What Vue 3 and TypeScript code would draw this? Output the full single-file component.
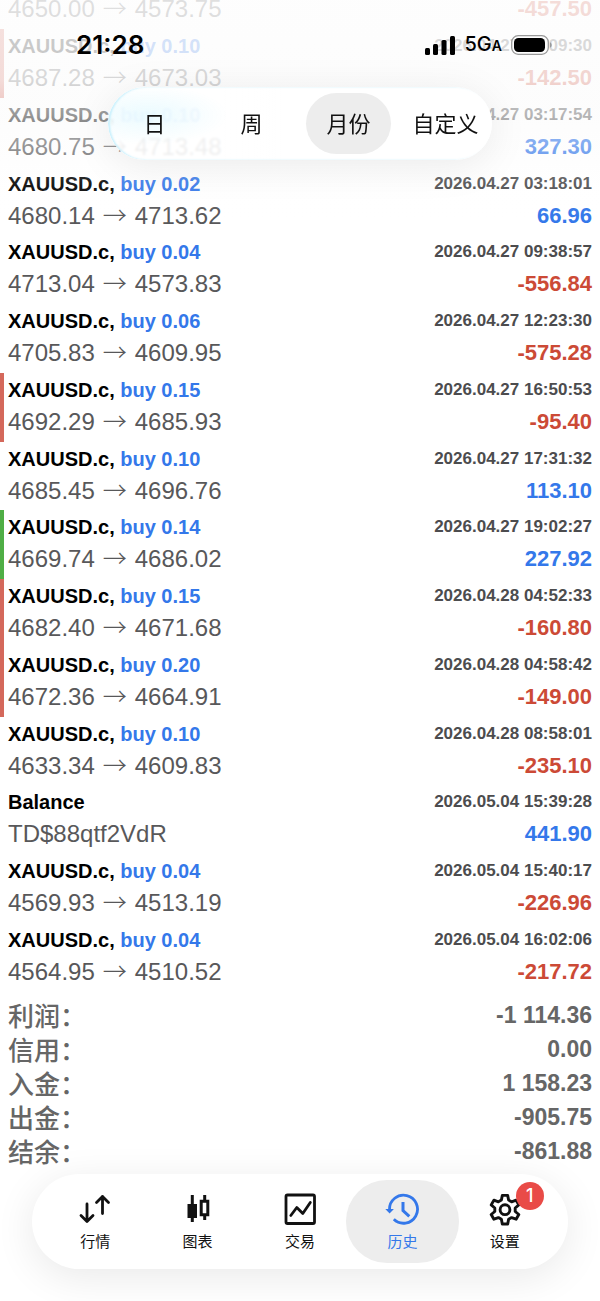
<script setup lang="ts">
import { ref } from 'vue'

interface Deal {
  title: string
  action?: string
  open: string
  close?: string
  time: string
  profit: string
  mark?: 'sl' | 'tp'
}

const symbol = 'XAUUSD.c,'

const deals: Deal[] = [
  { title: symbol, action: 'buy 0.10', open: '4650.00', close: '4573.75', time: '2026.04.24 15:02:11', profit: '-457.50' },
  { title: symbol, action: 'buy 0.10', open: '4687.28', close: '4673.03', time: '2026.04.27 03:09:30', profit: '-142.50', mark: 'sl' },
  { title: symbol, action: 'buy 0.10', open: '4680.75', close: '4713.48', time: '2026.04.27 03:17:54', profit: '327.30' },
  { title: symbol, action: 'buy 0.02', open: '4680.14', close: '4713.62', time: '2026.04.27 03:18:01', profit: '66.96' },
  { title: symbol, action: 'buy 0.04', open: '4713.04', close: '4573.83', time: '2026.04.27 09:38:57', profit: '-556.84' },
  { title: symbol, action: 'buy 0.06', open: '4705.83', close: '4609.95', time: '2026.04.27 12:23:30', profit: '-575.28' },
  { title: symbol, action: 'buy 0.15', open: '4692.29', close: '4685.93', time: '2026.04.27 16:50:53', profit: '-95.40', mark: 'sl' },
  { title: symbol, action: 'buy 0.10', open: '4685.45', close: '4696.76', time: '2026.04.27 17:31:32', profit: '113.10' },
  { title: symbol, action: 'buy 0.14', open: '4669.74', close: '4686.02', time: '2026.04.27 19:02:27', profit: '227.92', mark: 'tp' },
  { title: symbol, action: 'buy 0.15', open: '4682.40', close: '4671.68', time: '2026.04.28 04:52:33', profit: '-160.80', mark: 'sl' },
  { title: symbol, action: 'buy 0.20', open: '4672.36', close: '4664.91', time: '2026.04.28 04:58:42', profit: '-149.00', mark: 'sl' },
  { title: symbol, action: 'buy 0.10', open: '4633.34', close: '4609.83', time: '2026.04.28 08:58:01', profit: '-235.10' },
  { title: 'Balance', open: 'TD$88qtf2VdR', time: '2026.05.04 15:39:28', profit: '441.90' },
  { title: symbol, action: 'buy 0.04', open: '4569.93', close: '4513.19', time: '2026.05.04 15:40:17', profit: '-226.96' },
  { title: symbol, action: 'buy 0.04', open: '4564.95', close: '4510.52', time: '2026.05.04 16:02:06', profit: '-217.72' },
]

const totals = [
  { label: '利润：', value: '-1 114.36' },
  { label: '信用：', value: '0.00' },
  { label: '入金：', value: '1 158.23' },
  { label: '出金：', value: '-905.75' },
  { label: '结余：', value: '-861.88' },
]

const periods = ['日', '周', '月份', '自定义']
const period = ref('月份')

const tabs = [
  { id: 'quotes', label: '行情' },
  { id: 'charts', label: '图表' },
  { id: 'trade', label: '交易' },
  { id: 'history', label: '历史' },
  { id: 'settings', label: '设置', badge: 1 },
]
const tab = ref('history')
</script>

<template>
  <div class="app">
    <main class="history">
      <ul class="deals">
        <li v-for="deal in deals" :key="deal.time" class="deal" :class="deal.mark">
          <div class="line">
            <span class="title">{{ deal.title }} <span v-if="deal.action" class="action">{{ deal.action }}</span></span>
            <time class="time">{{ deal.time }}</time>
          </div>
          <div class="line">
            <span class="prices">{{ deal.open }}<template v-if="deal.close"><span class="arrow">→</span>{{ deal.close }}</template></span>
            <span class="profit" :class="{ loss: deal.profit.startsWith('-') }">{{ deal.profit }}</span>
          </div>
        </li>
      </ul>
      <dl class="totals">
        <div v-for="total in totals" :key="total.label" class="total">
          <dt>{{ total.label }}</dt>
          <dd>{{ total.value }}</dd>
        </div>
      </dl>
    </main>

    <header class="top">
      <div class="status">
        <span class="clock">21:28</span>
        <span class="signals">
          <svg class="bars" width="30" height="19" viewBox="0 0 30 19" aria-hidden="true">
            <rect x="0" y="12" width="5" height="7" rx="1.5" />
            <rect x="8" y="8" width="5" height="11" rx="1.5" />
            <rect x="16.500" y="4" width="5" height="15" rx="1.5" />
            <rect x="25" y="0" width="5" height="19" rx="1.5" />
          </svg>
          <span class="network">5G<small>A</small></span>
          <svg class="battery" width="41" height="20" viewBox="0 0 41 20" aria-hidden="true">
            <rect x="0.7" y="0.7" width="36.600" height="18.600" rx="6.500" fill="#fdfdfd" stroke="#999" stroke-width="1.3" />
            <rect x="3" y="3" width="31" height="14" rx="4.500" />
            <path d="M39 7.200c2.300.9 2.300 4.700 0 5.600z" fill="#999" />
          </svg>
        </span>
      </div>
      <nav class="periods">
        <button
          v-for="item in periods"
          :key="item"
          type="button"
          class="period"
          :class="{ active: item === period }"
          @click="period = item"
        >{{ item }}</button>
      </nav>
    </header>

    <nav class="tabbar">
      <button
        v-for="item in tabs"
        :key="item.id"
        type="button"
        class="tab"
        :class="{ active: item.id === tab }"
        @click="tab = item.id"
      >
        <span class="icon">
          <svg v-if="item.id === 'quotes'" width="34" height="34" viewBox="0 0 34 34" fill="none" stroke="currentColor" stroke-width="2.800" stroke-linecap="round" stroke-linejoin="round" aria-hidden="true">
            <path d="M9 12V29.500M3 23.500l6 6 6-6M24.500 21.500V4.500M18.500 10.500l6-6 6 6" />
          </svg>
          <svg v-else-if="item.id === 'charts'" width="34" height="34" viewBox="0 0 34 34" fill="none" stroke="currentColor" stroke-width="3" aria-hidden="true">
            <path d="M11.300 3v27M23.700 3v5.500M23.700 22.500V28" />
            <path d="M6.500 12h9.500v14H6.500z" fill="currentColor" stroke="none" />
            <path d="M20.200 9.200h6.600v13.500h-6.600z" />
          </svg>
          <svg v-else-if="item.id === 'trade'" width="34" height="34" viewBox="0 0 34 34" fill="none" stroke="currentColor" stroke-width="2.800" stroke-linejoin="round" aria-hidden="true">
            <rect x="3" y="3" width="28.500" height="28.500" rx="1.500" />
            <path d="M7.800 23.500l6-8 6 6 7.500-11" stroke-linecap="round" />
          </svg>
          <svg v-else-if="item.id === 'history'" width="34" height="34" viewBox="0 0 34 34" fill="none" stroke="currentColor" stroke-width="2.800" aria-hidden="true">
            <path d="M4.500 17.500A14 14 0 1 1 8.800 27.300" />
            <path d="M.3 17h8.600l-4.300 4.500z" fill="currentColor" stroke="none" />
            <path d="M18 10v8.500l6.300 5.800" stroke-width="3" />
          </svg>
          <svg v-else width="34" height="34" viewBox="0 0 34 34" fill="none" stroke="currentColor" stroke-width="2.900" stroke-linejoin="round" aria-hidden="true">
            <path d="M14.300 3.400h5.400l.9 4.700 3 1.700 4.500-1.600 2.700 4.700-3.600 3.100v3.500l3.600 3-2.700 4.700-4.500-1.600-3 1.700-.9 4.700h-5.400l-.9-4.700-3-1.700-4.500 1.600-2.700-4.700 3.600-3V16l-3.600-3.100 2.700-4.700 4.500 1.600 3-1.700z" />
            <circle cx="17" cy="17.700" r="4.900" />
          </svg>
          <span v-if="item.badge" class="badge">{{ item.badge }}</span>
        </span>
        <span class="label">{{ item.label }}</span>
      </button>
    </nav>
  </div>
</template>

<style>
body {
  margin: 0;
  background: #fff;
}
</style>

<style scoped>
.app {
  --blue: #3478ea;
  --red: #cc4a36;
  --bold: "Liberation Sans", sans-serif;
  --cjk: "Inter", "Noto Sans CJK SC", sans-serif;
  position: relative;
  min-height: 100vh;
  overflow: hidden;
  color: #000;
  font-family: "Liberation Sans", "Noto Sans CJK SC", sans-serif;
}

.history {
  margin-top: -40px;
  padding-bottom: 132px;
}

.deals,
.totals {
  margin: 0;
  padding: 0;
  list-style: none;
}

.deal {
  box-sizing: border-box;
  height: 69px;
  padding: 1px 8px 0 4px;
  border-left: 4px solid transparent;
}

.deal:nth-child(4n) {
  height: 68px;
}

.deal.sl {
  border-left-color: #d4685b;
}

.deal.tp {
  border-left-color: #4fae45;
}

.line {
  display: flex;
  align-items: center;
  justify-content: space-between;
  height: 32px;
  line-height: 32px;
  white-space: nowrap;
}

.title {
  font: 700 20px/32px var(--bold);
}

.action,
.profit {
  color: var(--blue);
}

.time {
  color: #4c4c4e;
  font: 700 17px/32px var(--bold);
}

.prices {
  color: #58585a;
  font-size: 24px;
}

.arrow {
  padding: 0 8px;
  font-family: "Noto Sans CJK SC", sans-serif;
  font-weight: 300;
  line-height: 24px;
}

.profit {
  font: 700 22px/32px var(--bold);
}

.profit.loss {
  color: var(--red);
}

.totals {
  padding: 6px 8px 0;
}

.total {
  display: flex;
  justify-content: space-between;
  color: #666;
  font: 700 23px/34px var(--bold);
}

.total dt {
  font-family: "Noto Sans CJK SC", sans-serif;
  font-size: 26px;
  font-weight: 500;
}

.total dd {
  margin: 0;
}

.top {
  position: absolute;
  inset: 0 0 auto;
  display: flex;
  flex-direction: column;
  align-items: center;
  height: 220px;
  background: linear-gradient(
    rgba(253, 253, 253, 0.82) 0,
    rgba(252, 252, 252, 0.78) 80px,
    rgba(251, 251, 251, 0.6) 115px,
    rgba(251, 251, 251, 0.35) 150px,
    rgba(253, 253, 253, 0.1) 185px,
    rgba(255, 255, 255, 0) 220px
  );
}

.status {
  box-sizing: border-box;
  display: flex;
  align-items: center;
  justify-content: space-between;
  width: 100%;
  height: 87px;
  padding: 3px 48px 0 76px;
}

.clock {
  font: 600 26px/32px "Inter", sans-serif;
}

.signals {
  display: flex;
  align-items: center;
  gap: 9px;
}

.network {
  font: 500 20px/24px "Inter", sans-serif;
}

.network small {
  font-size: 14px;
  font-weight: 600;
}

.periods {
  box-sizing: border-box;
  display: grid;
  grid-template-columns: repeat(4, 1fr);
  gap: 12px;
  width: 64%;
  height: 73px;
  padding: 6px 4px;
  border-radius: 37px;
  background:
    radial-gradient(80px 30px at 40px 28px, rgba(215, 247, 255, 0.5), rgba(255, 255, 255, 0)),
    linear-gradient(90deg, rgba(255, 255, 255, 0.85), rgba(255, 255, 255, 0.85) 30%, #fff 45%);
  box-shadow:
    inset 2px 0 2px rgba(190, 238, 252, 0.8),
    0 6px 40px rgba(0, 0, 0, 0.08);
  backdrop-filter: blur(1px);
}

.period,
.tab {
  padding: 0;
  border: 0;
  background: none;
  color: #111;
  font-family: var(--cjk);
}

.period {
  border-radius: 31px;
  font-size: 22px;
  line-height: 30px;
  white-space: nowrap;
}

.period.active,
.tab.active {
  background: #ededed;
}

.tabbar {
  position: absolute;
  inset: auto 32px 32px;
  box-sizing: border-box;
  display: grid;
  grid-template-columns: repeat(5, 1fr);
  height: 95px;
  padding: 6px 12px;
  border-radius: 48px;
  background: #fff;
  box-shadow: 0 8px 40px rgba(0, 0, 0, 0.09);
}

.tab {
  display: flex;
  flex-direction: column;
  align-items: center;
  justify-content: center;
  gap: 6px;
  margin: 0 -5px;
  border-radius: 41px;
  font-size: 15px;
  line-height: 20px;
}

.tab.active {
  color: var(--blue);
}

.icon {
  position: relative;
  display: flex;
}

.badge {
  position: absolute;
  top: -10px;
  right: -22px;
  width: 28px;
  height: 28px;
  border-radius: 14px;
  background: #e94b47;
  color: #fff;
  font: 500 18px/28px "Inter", sans-serif;
  text-align: center;
}
</style>
